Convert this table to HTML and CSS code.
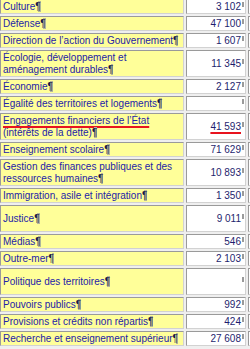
FILE: index.html
```html
<!DOCTYPE html>
<html lang="fr">
<head>
<meta charset="utf-8">
<link rel="stylesheet" href="styles.css">
</head>
<body>
<table class="tbl">
<colgroup><col class="c1"><col class="c2"><col class="c3"></colgroup>
<tr><td class="l">Culture<span class="pm">¶</span></td><td class="n">3 102<span class="tk"></span></td><td class="x"></td></tr>
<tr><td class="l">Défense<span class="pm">¶</span></td><td class="n">47 100<span class="tk"></span></td><td class="x"></td></tr>
<tr><td class="l">Direction de l’action du Gouvernement<span class="pm">¶</span></td><td class="n">1 607<span class="tk"></span></td><td class="x"></td></tr>
<tr><td class="l">Écologie, développement et aménagement durables<span class="pm">¶</span></td><td class="n">11 345<span class="tk"></span></td><td class="x"></td></tr>
<tr><td class="l">Économie<span class="pm">¶</span></td><td class="n">2 127<span class="tk"></span></td><td class="x"></td></tr>
<tr><td class="l">Égalité des territoires et logements<span class="pm">¶</span></td><td class="n"><span class="tk"></span></td><td class="x"></td></tr>
<tr><td class="l"><span class="u">Engagements financiers de l’État</span> (intérêts de la dette)<span class="pm">¶</span></td><td class="n"><span class="u">41 593</span><span class="tk"></span></td><td class="x"></td></tr>
<tr><td class="l">Enseignement scolaire<span class="pm">¶</span></td><td class="n">71 629<span class="tk"></span></td><td class="x"></td></tr>
<tr><td class="l">Gestion des finances publiques et des ressources humaines<span class="pm">¶</span></td><td class="n">10 893<span class="tk"></span></td><td class="x"></td></tr>
<tr><td class="l">Immigration, asile et intégration<span class="pm">¶</span></td><td class="n">1 350<span class="tk"></span></td><td class="x"></td></tr>
<tr><td class="l">Justice<span class="pm">¶</span></td><td class="n">9 011<span class="tk"></span></td><td class="x">&nbsp;<br>&nbsp;</td></tr>
<tr><td class="l">Médias<span class="pm">¶</span></td><td class="n">546<span class="tk"></span></td><td class="x"></td></tr>
<tr><td class="l">Outre-mer<span class="pm">¶</span></td><td class="n">2 103<span class="tk"></span></td><td class="x"></td></tr>
<tr><td class="l">Politique des territoires<span class="pm">¶</span></td><td class="n"><span class="tk"></span></td><td class="x">&nbsp;<br>&nbsp;</td></tr>
<tr><td class="l">Pouvoirs publics<span class="pm">¶</span></td><td class="n">992<span class="tk"></span></td><td class="x"></td></tr>
<tr><td class="l">Provisions et crédits non répartis<span class="pm">¶</span></td><td class="n">424<span class="tk"></span></td><td class="x"></td></tr>
<tr><td class="l">Recherche et enseignement supérieur<span class="pm">¶</span></td><td class="n">27 608<span class="tk"></span></td><td class="x"></td></tr>
</table>
</body>
</html>
```

FILE: styles.css
```css
html, body {
  margin: 0;
  padding: 0;
  overflow: hidden;
  background: #f0f0f0;
}

.tbl {
  border-collapse: separate;
  border-spacing: 2px;
  background: #efefef;
  table-layout: fixed;
  width: 322px;
  margin: -3px 0 0 -2px;
  font: 10px/12px "Liberation Sans", Arial, sans-serif;
}

.c1 { width: 184px; }
.c2 { width: 60px; }
.c3 { width: 70px; }

.tbl td {
  box-sizing: border-box;
  border: 1px solid;
  border-color: #9a9a9a #d2d2d2 #d2d2d2 #9a9a9a;
  padding: 1px 1px 0 2px;
  vertical-align: middle;
}

.l {
  background: #ffff99;
  color: #2323a8;
}

.n {
  background: #ffffff;
  color: #1e1e6e;
  text-align: right;
  white-space: nowrap;
}

.tbl td.n {
  padding-right: 1px;
}

.x {
  background: #ffffff;
}

.pm {
  color: #1a1a44;
  background: linear-gradient(90deg, transparent 50%, #b6b69c 50%);
}

.tk {
  display: inline-block;
  width: 2px;
  height: 5px;
  margin-left: 1px;
  background: #9a9a9a;
  vertical-align: 3px;
}

.u {
  text-decoration: underline;
  text-decoration-color: #e8141e;
  text-decoration-thickness: 2px;
  text-underline-offset: 2px;
  text-decoration-skip-ink: none;
}
```
